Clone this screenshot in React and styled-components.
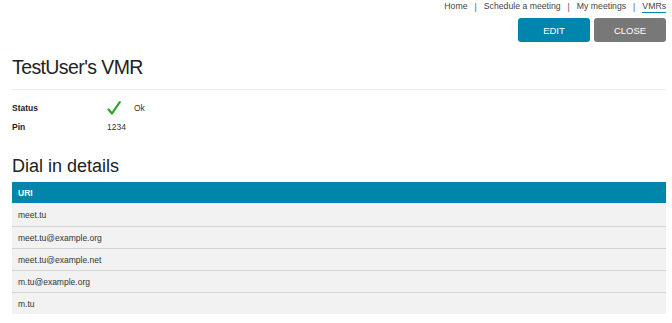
import styled, { createGlobalStyle } from "styled-components";

const Global = createGlobalStyle`
    body {
        margin:0;
        background:#fff;
        font-family:"Liberation Sans", Arial, sans-serif;
        color:#333;
    }
`
const Page = styled.div`
    padding:0 6px 0 12px;
`
const Nav = styled.div`
    display:flex;
    justify-content:flex-end;
    align-items:center;
    height:13px;
    font-size:8.7px;
    color:#444;
`
const NavLink = styled.span`
    color:#444;
    padding-bottom:1px;
    border-bottom:${props => props.active ? "1px solid #0085ad" : "1px solid transparent"};
`
const Sep = styled.span`
    margin:0 7px;
    color:#555;
`
const Actions = styled.div`
    display:flex;
    justify-content:flex-end;
    gap:4px;
    margin-top:5px;
`
const Button = styled.button`
    width:72px;
    height:24px;
    border:none;
    border-radius:3px;
    color:#fff;
    font-family:inherit;
    font-size:9.5px;
    background:${props => props.grey ? "#787878" : "#0085ad"};
`
const Title = styled.h1`
    margin:12px 0 0;
    font-size:19.5px;
    letter-spacing:-0.6px;
    font-weight:normal;
    color:#222;
    line-height:26px;
`
const Rule = styled.div`
    margin-top:9px;
    border-top:1px solid #ececec;
`
const Info = styled.div`
    display:grid;
    grid-template-columns:95px auto;
    grid-auto-rows:19px;
    align-items:center;
    margin-top:8px;
    font-size:8.5px;
`
const Label = styled.div`
    font-weight:bold;
    color:#222;
`
const Value = styled.div`
    display:flex;
    align-items:center;
    gap:13px;
    color:#333;
`
const SubTitle = styled.h2`
    margin:18px 0 0;
    font-size:18px;
    font-weight:normal;
    color:#222;
    line-height:24px;
`
const Table = styled.div`
    margin-top:4px;
    font-size:8.5px;
`
const Head = styled.div`
    height:21px;
    display:flex;
    align-items:center;
    padding-left:6px;
    background:#0086ab;
    color:#fff;
    font-weight:bold;
`
const Row = styled.div`
    height:21px;
    display:flex;
    align-items:center;
    padding-left:6px;
    background:#f2f2f2;
    color:#333;
    border-top:1px solid #d4d4d4;
    &:first-of-type { border-top:none; height:23px; }
`

const Check = () => (
    <svg width="14" height="14" viewBox="0 0 14 14">
        <path d="M1.5 8.5 L5 12.5 L12.8 1.2" fill="none" stroke="#2aa52a" strokeWidth="2.2" strokeLinecap="round" strokeLinejoin="round" />
    </svg>
)

const uris = ["meet.tu", "meet.tu@example.org", "meet.tu@example.net", "m.tu@example.org", "m.tu"];

const App = () => {
    return (
        <Page>
            <Global />
            <Nav>
                <NavLink>Home</NavLink>
                <Sep>|</Sep>
                <NavLink>Schedule a meeting</NavLink>
                <Sep>|</Sep>
                <NavLink>My meetings</NavLink>
                <Sep>|</Sep>
                <NavLink active>VMRs</NavLink>
            </Nav>
            <Actions>
                <Button>EDIT</Button>
                <Button grey>CLOSE</Button>
            </Actions>
            <Title>TestUser's VMR</Title>
            <Rule />
            <Info>
                <Label>Status</Label>
                <Value><Check /><span>Ok</span></Value>
                <Label>Pin</Label>
                <Value>1234</Value>
            </Info>
            <SubTitle>Dial in details</SubTitle>
            <Table>
                <Head>URI</Head>
                <div>
                    {uris.map(u => <Row key={u}>{u}</Row>)}
                </div>
            </Table>
        </Page>
    );
}

export default App;
